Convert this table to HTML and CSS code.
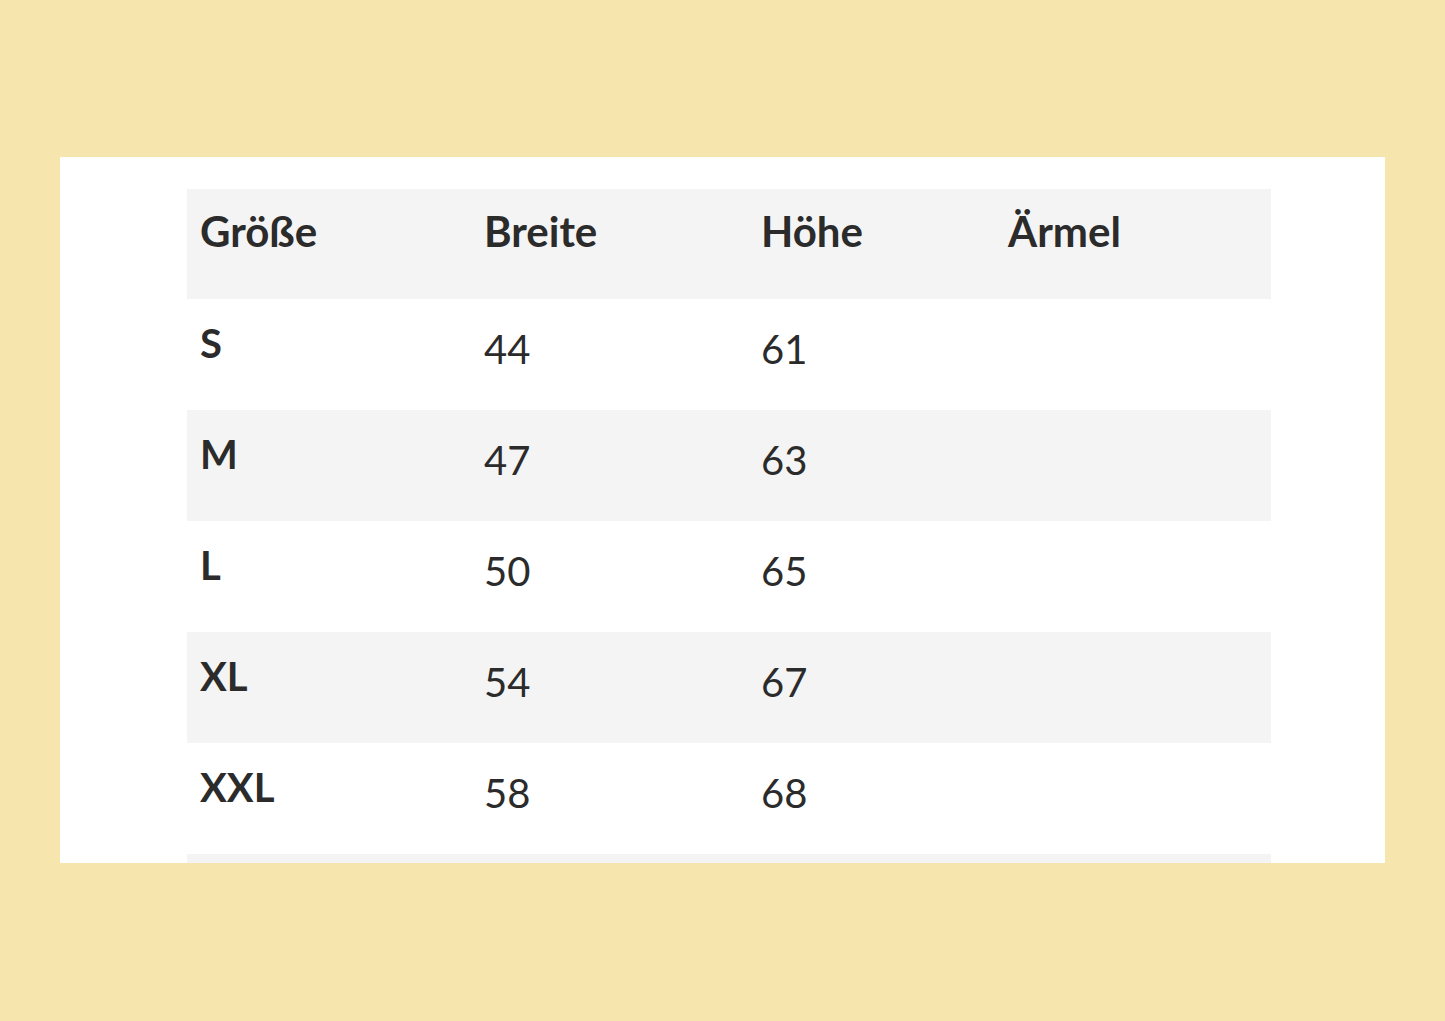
FILE: index.html
```html
<!DOCTYPE html>
<html lang="de">
<head>
<meta charset="utf-8">
<title>Größentabelle</title>
<link rel="stylesheet" href="styles.css">
</head>
<body>
<div class="panel">
  <table class="sizes">
    <thead>
      <tr class="grey"><th class="c1">Größe</th><th class="c2">Breite</th><th class="c3">Höhe</th><th class="c4">Ärmel</th></tr>
    </thead>
    <tbody>
      <tr><td class="lab">S</td><td>44</td><td>61</td><td></td></tr>
      <tr class="grey"><td class="lab">M</td><td>47</td><td>63</td><td></td></tr>
      <tr><td class="lab">L</td><td>50</td><td>65</td><td></td></tr>
      <tr class="grey"><td class="lab">XL</td><td>54</td><td>67</td><td></td></tr>
      <tr><td class="lab">XXL</td><td>58</td><td>68</td><td></td></tr>
      <tr class="grey"><td class="lab">&nbsp;</td><td></td><td></td><td></td></tr>
    </tbody>
  </table>
</div>
</body>
</html>
```
FILE: styles.css
```css
html, body {
  margin: 0;
  padding: 0;
  background: #f7e5ae;
}
body {
  font-family: Lato, "Open Sans", sans-serif;
  color: #2b2b2b;
  padding-top: 157px;
  height: 1021px;
  box-sizing: border-box;
}
.panel {
  margin-left: 60px;
  width: 1325px;
  height: 706px;
  background: #ffffff;
  overflow: hidden;
  padding-top: 32px;
  padding-left: 127px;
  box-sizing: border-box;
}
.sizes {
  border-collapse: collapse;
  width: 1084px;
  table-layout: fixed;
}
.sizes th, .sizes td {
  height: 111px;
  padding: 0 0 0 13px;
  box-sizing: border-box;
  vertical-align: top;
  text-align: left;
  line-height: 1;
}
.sizes th {
  font-weight: 700;
  font-size: 42px;
  padding-top: 21px;
  height: 110px;
}
.sizes td {
  font-weight: 400;
  font-size: 40px;
  padding-top: 30px;
}
.sizes td.lab {
  font-weight: 700;
  padding-top: 24px;
}
.c1 { width: 284px; }
.c2 { width: 277px; }
.c3 { width: 247px; }
.c4 { width: 276px; }
.grey { background: #f4f4f4; }
```
